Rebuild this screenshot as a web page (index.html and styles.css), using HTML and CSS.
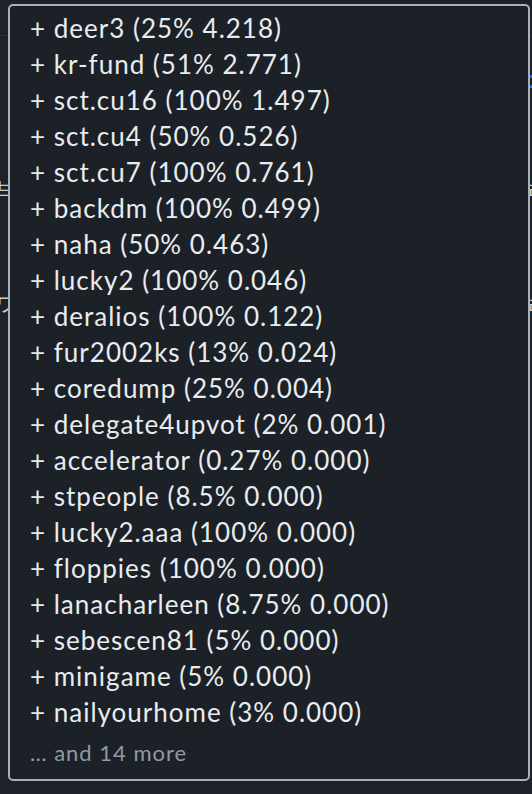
FILE: index.html
```html
<!DOCTYPE html>
<html>
<head>
    <meta charset="UTF-8" />
    <title>Voters tooltip</title>
    <link rel="stylesheet" href="styles.css">
</head>
<body>
    <!-- page content behind the tooltip -->
    <main class="page">
        <div class="rule"></div>
        <div class="row row-link"><span class="cell-right link">2</span></div>
        <div class="row row-first"><span class="cell-left">브</span><span class="cell-right">보</span></div>
        <div class="row"><span class="cell-left">ワ</span><span class="cell-right">보</span></div>
    </main>

    <!-- voters tooltip -->
    <div class="tooltip">
        <ul class="voters">
            <li>+ deer3 (25% 4.218)</li>
            <li>+ kr-fund (51% 2.771)</li>
            <li>+ sct.cu16 (100% 1.497)</li>
            <li>+ sct.cu4 (50% 0.526)</li>
            <li>+ sct.cu7 (100% 0.761)</li>
            <li>+ backdm (100% 0.499)</li>
            <li>+ naha (50% 0.463)</li>
            <li>+ lucky2 (100% 0.046)</li>
            <li>+ deralios (100% 0.122)</li>
            <li>+ fur2002ks (13% 0.024)</li>
            <li>+ coredump (25% 0.004)</li>
            <li>+ delegate4upvot (2% 0.001)</li>
            <li>+ accelerator (0.27% 0.000)</li>
            <li>+ stpeople (8.5% 0.000)</li>
            <li>+ lucky2.aaa (100% 0.000)</li>
            <li>+ floppies (100% 0.000)</li>
            <li>+ lanacharleen (8.75% 0.000)</li>
            <li>+ sebescen81 (5% 0.000)</li>
            <li>+ minigame (5% 0.000)</li>
            <li>+ nailyourhome (3% 0.000)</li>
        </ul>
        <p class="more">… and 14 more</p>
    </div>
</body>
</html>
```

FILE: styles.css
```css
body {
  margin: 0;
  background-color: #212529;
  font-family: "Source Sans Pro", Lato, "Noto Sans CJK KR", sans-serif;
  color: #e9ecee;
}

.page {
  height: 794px;
  background-color: #1e2228;
}

.rule {
  height: 35px;
  border-bottom: 1px solid #2a2f35;
}

.row {
  display: flex;
  justify-content: space-between;
  align-items: center;
  height: 40px;
  font-size: 20px;
  color: #c9ced2;
}

.row-link {
  justify-content: flex-end;
  margin: 24px 0 68px 0;
}

.row-first {
  margin-bottom: 75px;
}

.cell-left {
  margin-left: -4px;
}

.cell-right {
  margin-right: -8px;
}

.link {
  color: #3a7bd5;
}

.tooltip {
  position: absolute;
  top: 4px;
  left: 8px;
  width: 480px;
  padding: 4px 18px 11px 20px;
  background-color: #1c2128;
  border: 2px solid #a7b1b9;
  border-radius: 5px;
}

.voters {
  list-style: none;
  margin: 0;
  padding: 0;
}

.voters li {
  height: 36px;
  line-height: 36px;
  font-size: 26px;
  letter-spacing: 1px;
  white-space: nowrap;
}

.more {
  margin: 8px 0 0 0;
  height: 30px;
  line-height: 30px;
  font-size: 22px;
  letter-spacing: 1px;
  color: #8f9ba4;
}
```
